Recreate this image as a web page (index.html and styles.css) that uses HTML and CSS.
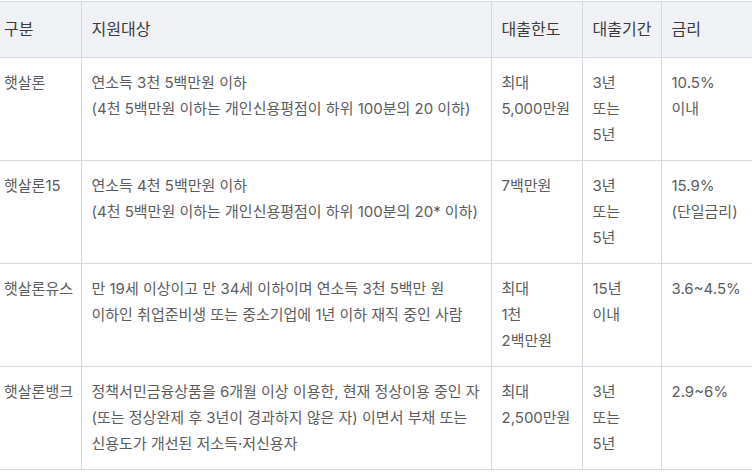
FILE: index.html
```html
<!DOCTYPE html>
<html lang="ko">
<head>
    <meta charset="UTF-8">
    <meta name="viewport" content="width=device-width, initial-scale=1.0">
    <title>햇살론 상품 비교</title>
    <link rel="stylesheet" href="styles.css">
</head>
<body>
    <div class="table-wrap">
        <table class="loan-table">
            <colgroup>
                <col class="col-name">
                <col class="col-target">
                <col class="col-limit">
                <col class="col-term">
                <col class="col-rate">
            </colgroup>
            <thead>
                <tr>
                    <th>구분</th>
                    <th>지원대상</th>
                    <th>대출한도</th>
                    <th>대출기간</th>
                    <th>금리</th>
                </tr>
            </thead>
            <tbody>
                <tr>
                    <td>햇살론</td>
                    <td>연소득 3천 5백만원 이하<br>(4천 5백만원 이하는 개인신용평점이 하위 100분의 20 이하)</td>
                    <td>최대<br>5,000만원</td>
                    <td>3년<br>또는<br>5년</td>
                    <td>10.5%<br>이내</td>
                </tr>
                <tr>
                    <td>햇살론15</td>
                    <td>연소득 4천 5백만원 이하<br>(4천 5백만원 이하는 개인신용평점이 하위 100분의 20* 이하)</td>
                    <td>7백만원</td>
                    <td>3년<br>또는<br>5년</td>
                    <td>15.9%<br>(단일금리)</td>
                </tr>
                <tr>
                    <td>햇살론유스</td>
                    <td>만 19세 이상이고 만 34세 이하이며 연소득 3천 5백만 원<br>이하인 취업준비생 또는 중소기업에 1년 이하 재직 중인 사람</td>
                    <td>최대<br>1천<br>2백만원</td>
                    <td>15년<br>이내</td>
                    <td>3.6~4.5%</td>
                </tr>
                <tr>
                    <td>햇살론뱅크</td>
                    <td>정책서민금융상품을 6개월 이상 이용한, 현재 정상이용 중인 자<br>(또는 정상완제 후 3년이 경과하지 않은 자) 이면서 부채 또는<br>신용도가 개선된 저소득·저신용자</td>
                    <td>최대<br>2,500만원</td>
                    <td>3년<br>또는<br>5년</td>
                    <td>2.9~6%</td>
                </tr>
            </tbody>
        </table>
    </div>
</body>
</html>
```

FILE: styles.css
```css
body {
    margin: 0;
    background-color: #fff;
    overflow: hidden;
    font-family: Inter, "Noto Sans CJK KR", sans-serif;
}
.table-wrap {
    padding-top: 1px;
    width: 752px;
    overflow: hidden;
}
.loan-table {
    border-collapse: collapse;
    table-layout: fixed;
    width: 820px;
}
.col-name { width: 81px; }
.col-target { width: 410px; }
.col-limit { width: 91px; }
.col-term { width: 79px; }
.col-rate { width: 159px; }
.loan-table th,
.loan-table td {
    border: 1px solid #d5d8e0;
    text-align: left;
    vertical-align: top;
    padding: 12px 10px;
    white-space: nowrap;
}
.loan-table tr > :first-child {
    border-left: none;
    padding-left: 4px;
}
.loan-table th {
    background-color: #f0f1f5;
    color: #3a3a3a;
    font-weight: normal;
    font-size: 16px;
    line-height: 25px;
    padding-top: 15px;
    padding-bottom: 15px;
}
.loan-table td {
    color: #5c5c5c;
    font-size: 15px;
    line-height: 26px;
}
```
